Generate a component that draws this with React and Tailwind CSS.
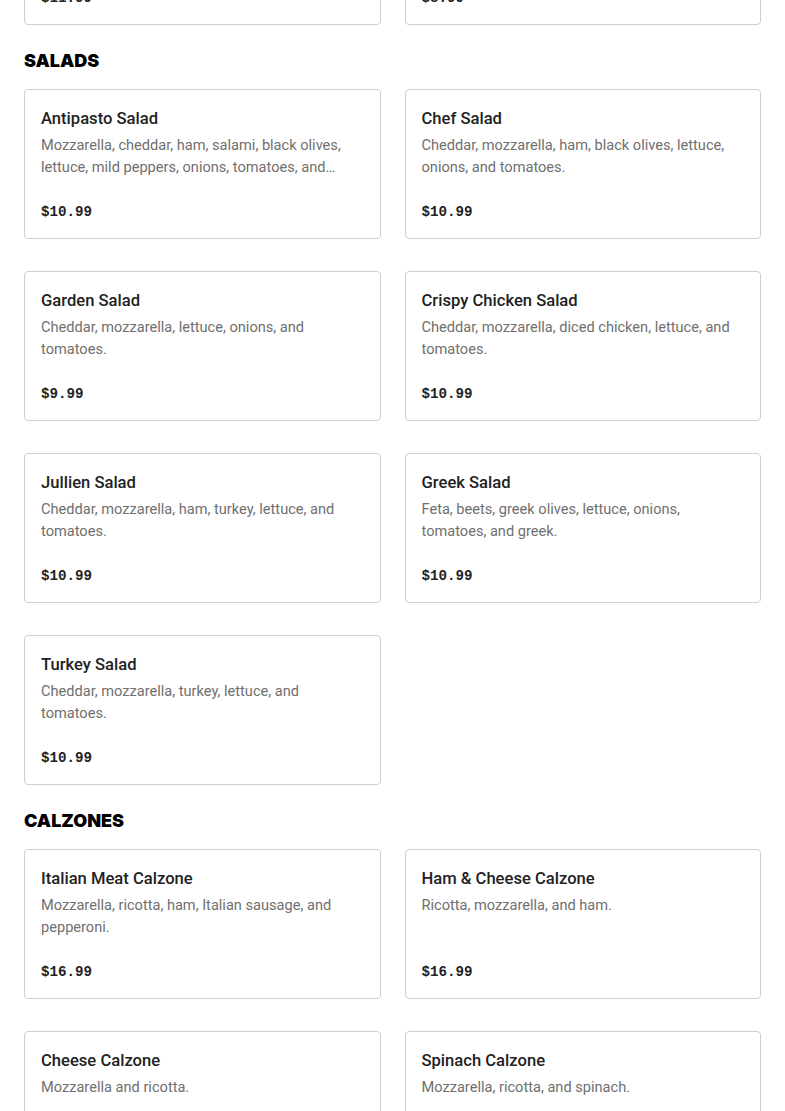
import React from "react";

const prev = [
  { name: "Previous Item", desc: "Description text here.", price: "$11.99" },
  { name: "Previous Item", desc: "Description text here.", price: "$8.99" },
];

const sections = [
  {
    title: "SALADS",
    items: [
      { name: "Antipasto Salad", desc: "Mozzarella, cheddar, ham, salami, black olives, lettuce, mild peppers, onions, tomatoes, and pepperoncini.", price: "$10.99" },
      { name: "Chef Salad", desc: "Cheddar, mozzarella, ham, black olives, lettuce, onions, and tomatoes.", price: "$10.99" },
      { name: "Garden Salad", desc: "Cheddar, mozzarella, lettuce, onions, and tomatoes.", price: "$9.99" },
      { name: "Crispy Chicken Salad", desc: "Cheddar, mozzarella, diced chicken, lettuce, and tomatoes.", price: "$10.99" },
      { name: "Jullien Salad", desc: "Cheddar, mozzarella, ham, turkey, lettuce, and tomatoes.", price: "$10.99" },
      { name: "Greek Salad", desc: "Feta, beets, greek olives, lettuce, onions, tomatoes, and greek.", price: "$10.99" },
      { name: "Turkey Salad", desc: "Cheddar, mozzarella, turkey, lettuce, and tomatoes.", price: "$10.99" },
    ],
  },
  {
    title: "CALZONES",
    items: [
      { name: "Italian Meat Calzone", desc: "Mozzarella, ricotta, ham, Italian sausage, and pepperoni.", price: "$16.99" },
      { name: "Ham & Cheese Calzone", desc: "Ricotta, mozzarella, and ham.", price: "$16.99" },
      { name: "Cheese Calzone", desc: "Mozzarella and ricotta.", price: "$14.99" },
      { name: "Spinach Calzone", desc: "Mozzarella, ricotta, and spinach.", price: "$15.99" },
    ],
  },
];

function Card({ item }) {
  return (
    <div className="flex flex-col rounded-[4px] border border-[#cfcfcf] bg-white px-4 pt-[17px] pb-4">
      <div className="h-6 text-[16.6px] leading-6 font-medium text-[#222222] [font-family:Roboto,'Liberation_Sans',sans-serif]">
        {item.name}
      </div>
      <div className="mt-[3px] min-h-[44px] line-clamp-2 text-[14.6px] leading-[22px] text-[#707070] [font-family:Roboto,'Liberation_Sans',sans-serif]">
        {item.desc}
      </div>
      <div className="mt-[24px] h-5 text-[14.2px] leading-5 font-bold text-[#222222] [font-family:'Liberation_Mono',monospace]">
        {item.price}
      </div>
    </div>
  );
}

export default function App() {
  return (
    <div className="min-h-[1111px] overflow-hidden bg-white px-6">
      <div className="-mt-[125px] grid grid-cols-2 gap-x-6 gap-y-8">
        {prev.map((it, i) => (
          <Card key={i} item={it} />
        ))}
      </div>
      {sections.map((s) => (
        <section key={s.title}>
          <h2 className="mt-[23px] mb-[15px] h-[26px] text-[18px] leading-[26px] font-black text-black [font-family:Inter,'Liberation_Sans',sans-serif]">
            {s.title}
          </h2>
          <div className="grid grid-cols-2 gap-x-6 gap-y-8">
            {s.items.map((it, i) => (
              <Card key={i} item={it} />
            ))}
          </div>
        </section>
      ))}
    </div>
  );
}
